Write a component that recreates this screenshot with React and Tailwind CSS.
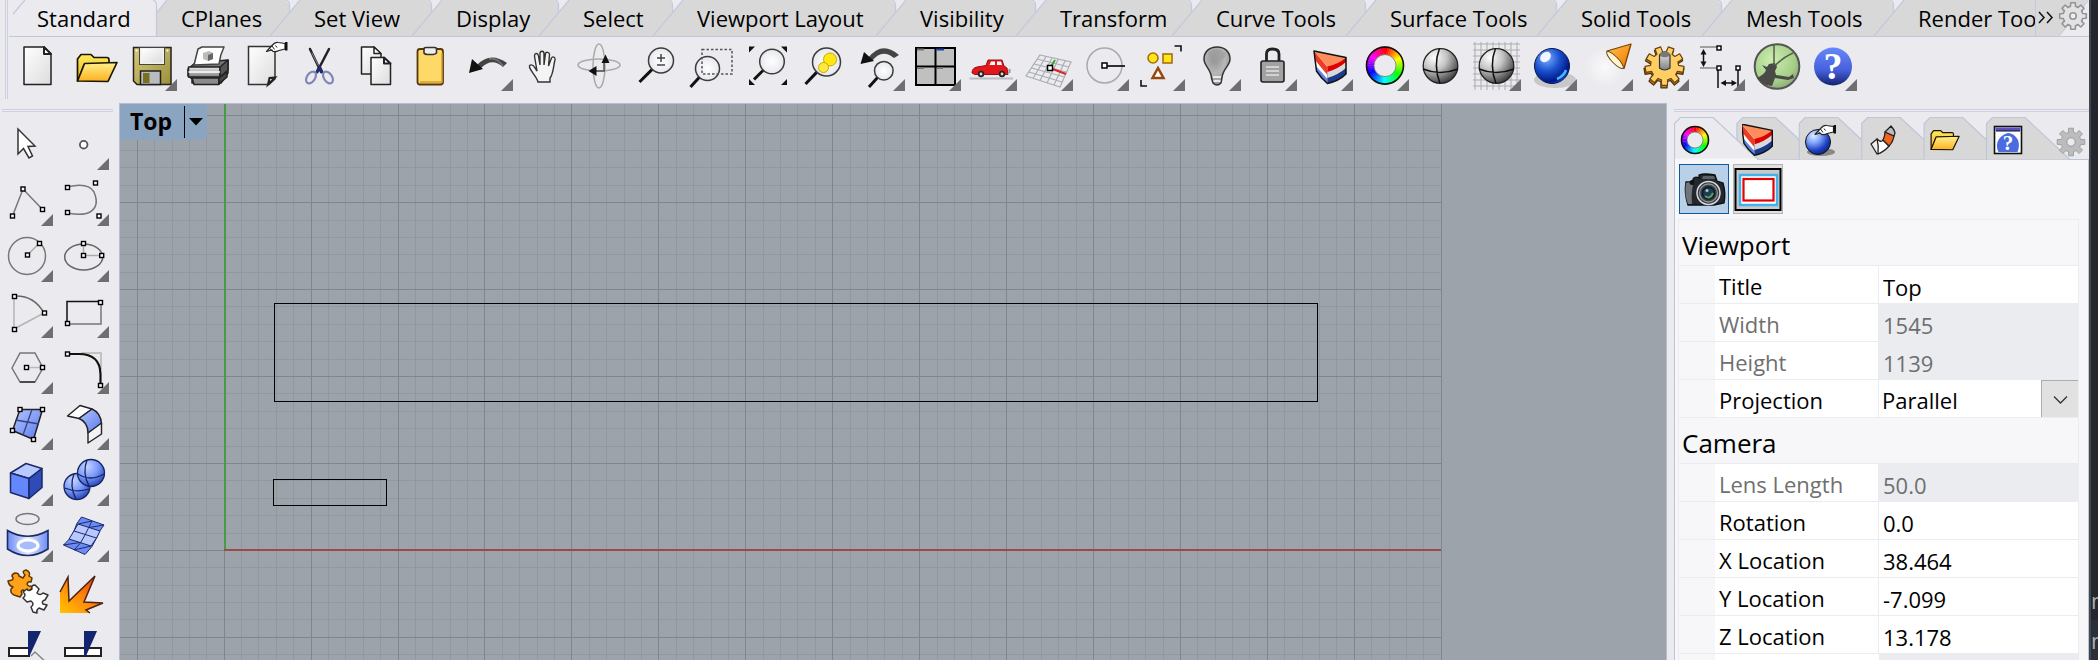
import React from "react";

/* ---------- shared drawing helpers ---------- */

const Handle = ({ x, y }) => (
  <rect x={x - 2} y={y - 2} width="4" height="4" fill="#fff" stroke="#000" strokeWidth="1.4" />
);

const Corner = () => <path d="M50 38V50H38Z" fill="#6f6f72" />;

const polar = (cx, cy, r, deg) => {
  const a = ((deg - 90) * Math.PI) / 180;
  return [cx + r * Math.cos(a), cy + r * Math.sin(a)];
};

const Wheel = ({ cx, cy, r, inner }) => {
  const mid = (r + inner) / 2;
  return (
    <g>
      {Array.from({ length: 48 }, (_, i) => {
        const [x1, y1] = polar(cx, cy, mid, i * 7.5 - 0.6);
        const [x2, y2] = polar(cx, cy, mid, i * 7.5 + 8.1);
        return (
          <path
            key={i}
            d={`M${x1} ${y1}A${mid} ${mid} 0 0 1 ${x2} ${y2}`}
            stroke={`hsl(${i * 7.5} 100% 50%)`}
            strokeWidth={r - inner}
            fill="none"
          />
        );
      })}
      <circle cx={cx} cy={cy} r={r - 0.5} fill="none" stroke="#111" strokeWidth="1.6" />
      <circle cx={cx} cy={cy} r={inner} fill="none" stroke="#777" strokeWidth="0.8" />
    </g>
  );
};

const Lens = ({ cx, cy, r, hx, hy }) => {
  const d = Math.hypot(hx - cx, hy - cy);
  const sx = cx + ((hx - cx) * r) / d;
  const sy = cy + ((hy - cy) * r) / d;
  return (
    <g>
      <path d={`M${sx} ${sy}L${hx} ${hy}`} stroke="#111" strokeWidth="3" />
      <circle cx={cx} cy={cy} r={r} fill="url(#lens)" stroke="#3c3c3c" strokeWidth="1.5" />
    </g>
  );
};

const gearPath = (cx, cy, ro, ri, teeth, offset = 0) => {
  const step = 360 / teeth;
  const pts = [];
  for (let i = 0; i < teeth; i++) {
    const a = i * step + offset;
    pts.push(polar(cx, cy, ri, a - step * 0.32));
    pts.push(polar(cx, cy, ro, a - step * 0.22));
    pts.push(polar(cx, cy, ro, a + step * 0.22));
    pts.push(polar(cx, cy, ri, a + step * 0.32));
  }
  return "M" + pts.map((p) => p[0].toFixed(1) + " " + p[1].toFixed(1)).join("L") + "Z";
};

const Wedge = () => (
  <g strokeLinejoin="round">
    <path d="M11 10L24.400 30V42.500L13.500 30Z" fill="#5b86e8" />
    <path d="M11 10L24.400 30V38L13 25Z" fill="#fff" />
    <path d="M11 10L24.400 26V34L12 19Z" fill="#ee3b24" />
    <path d="M24.400 30L43 24V33Q36 40 24.400 42.500Z" fill="#1c3a8c" />
    <path d="M24.400 28L43 20V27Q35 34 24.400 37Z" fill="#d9d9d9" />
    <path d="M24.400 24L43 16.500V21Q35 28 24.400 31Z" fill="#d00" />
    <path d="M11 10L43 16.500Q36 23 24.400 25.500Z" fill="#ff8d5c" />
    <path d="M11 10L43 16.500V33Q36 40 24.400 42.500Q18 37 13.500 30Z" fill="none" stroke="#111" strokeWidth="1.5" />
  </g>
);

const Folder = () => (
  <g stroke="#1c1500" strokeWidth="1.7" strokeLinejoin="round">
    <path d="M6.500 40V18L10 13.500H20L23 16.500H36Q38 16.500 38 19V24H13L7 40Z" fill="url(#folderBack)" />
    <path d="M6.500 40L13.500 22.500L46 21.500L37 40.500Z" fill="url(#folderFront)" />
  </g>
);

const Pointing = () => (
  <g stroke="#222" strokeWidth="1.200" strokeLinejoin="round">
    <path d="M27.500 10.500L33 4.500Q36 1 39 1.500L46 2.500V8L40 9.500Q37 11 34 10.500L33 9Z" fill="#fff" />
    <path d="M30.500 7.500L33 9.500M33 5L35.500 8.500M36.500 4.500L38 6.500" fill="none" strokeWidth="1" />
    <path d="M46 1V9.500H48.500V1Z" fill="#111" stroke="none" />
  </g>
);

const Ball = ({ fill }) => (
  <g>
    <circle cx="25.500" cy="25" r="17.300" fill={fill} stroke="#222" strokeWidth="1.300" />
    <path d="M24.500 7.500Q18 24 25 42.500M8 28Q25 35 43 28" fill="none" stroke="#111" strokeWidth="1.500" />
  </g>
);

const Defs = () => (
  <svg className="absolute h-0 w-0" aria-hidden="true">
    <defs>
      <linearGradient id="paper" x1="0" y1="0" x2="1" y2="1">
        <stop offset="0" stopColor="#fff" />
        <stop offset="1" stopColor="#dcdcdc" />
      </linearGradient>
      <linearGradient id="folderBack" x1="0" y1="0" x2="0" y2="1">
        <stop offset="0" stopColor="#ffe95e" />
        <stop offset="1" stopColor="#e5b81d" />
      </linearGradient>
      <linearGradient id="folderFront" x1="0" y1="0" x2="0" y2="1">
        <stop offset="0" stopColor="#fff08a" />
        <stop offset="1" stopColor="#fdb021" />
      </linearGradient>
      <linearGradient id="disk" x1="0" y1="0" x2="1" y2="1">
        <stop offset="0" stopColor="#d9cc7a" />
        <stop offset="1" stopColor="#9c8f3a" />
      </linearGradient>
      <linearGradient id="steel" x1="0" y1="0" x2="0" y2="1">
        <stop offset="0" stopColor="#e8e8e8" />
        <stop offset="1" stopColor="#808080" />
      </linearGradient>
      <linearGradient id="blueFace" x1="0" y1="0" x2="1" y2="1">
        <stop offset="0" stopColor="#b4c6ff" />
        <stop offset="1" stopColor="#5a78ee" />
      </linearGradient>
      <linearGradient id="blueBand" x1="0" y1="0" x2="1" y2="0">
        <stop offset="0" stopColor="#6c8cf5" />
        <stop offset="0.500" stopColor="#e4eaff" />
        <stop offset="1" stopColor="#6c8cf5" />
      </linearGradient>
      <linearGradient id="help" x1="0" y1="0" x2="0" y2="1">
        <stop offset="0" stopColor="#6688fa" />
        <stop offset="0.600" stopColor="#4560dc" />
        <stop offset="1" stopColor="#14236e" />
      </linearGradient>
      <linearGradient id="fire" x1="0" y1="1" x2="1" y2="0">
        <stop offset="0" stopColor="#ffc400" />
        <stop offset="0.450" stopColor="#ff8a0c" />
        <stop offset="1" stopColor="#ee2a10" />
      </linearGradient>
      <linearGradient id="coneFill" x1="0" y1="0" x2="1" y2="1">
        <stop offset="0" stopColor="#ffc94a" />
        <stop offset="1" stopColor="#f07000" />
      </linearGradient>
      <radialGradient id="lens">
        <stop offset="0" stopColor="#fff" />
        <stop offset="1" stopColor="#e6e8ec" />
      </radialGradient>
      <radialGradient id="greySphere" cx="0.320" cy="0.250" r="0.800">
        <stop offset="0" stopColor="#fff" />
        <stop offset="0.450" stopColor="#c4c4c4" />
        <stop offset="1" stopColor="#3c3c3c" />
      </radialGradient>
      <radialGradient id="blueSphere" cx="0.350" cy="0.280" r="0.800">
        <stop offset="0" stopColor="#7fb0ff" />
        <stop offset="0.450" stopColor="#1b53cf" />
        <stop offset="0.850" stopColor="#001585" />
        <stop offset="1" stopColor="#1d6cf0" />
      </radialGradient>
      <radialGradient id="paleBlueSphere" cx="0.320" cy="0.250" r="0.850">
        <stop offset="0" stopColor="#e2ecff" />
        <stop offset="0.350" stopColor="#7fa4fb" />
        <stop offset="0.700" stopColor="#1e40c0" />
        <stop offset="1" stopColor="#0a1b78" />
      </radialGradient>
      <radialGradient id="softBlue" cx="0.350" cy="0.250" r="0.800">
        <stop offset="0" stopColor="#c6d5ff" />
        <stop offset="0.550" stopColor="#7796f8" />
        <stop offset="1" stopColor="#2342b4" />
      </radialGradient>
      <radialGradient id="bulb" cx="0.400" cy="0.300" r="0.800">
        <stop offset="0" stopColor="#8f8f8f" />
        <stop offset="0.500" stopColor="#b8b8b8" />
        <stop offset="1" stopColor="#8a8a8a" />
      </radialGradient>
      <radialGradient id="green" cx="0.400" cy="0.350" r="0.700">
        <stop offset="0" stopColor="#cdeeb0" />
        <stop offset="0.700" stopColor="#a5cf88" />
        <stop offset="1" stopColor="#8ba67a" />
      </radialGradient>
      <radialGradient id="glow">
        <stop offset="0" stopColor="#fff" stopOpacity="0.700" />
        <stop offset="1" stopColor="#fff" stopOpacity="0" />
      </radialGradient>
    </defs>
  </svg>
);

/* ---------- top toolbar ---------- */

const topTools = [
  ["New", false, (
    <g stroke="#222" strokeWidth="1.500" strokeLinejoin="round">
      <path d="M9 6H29L36 13V43.500H9Z" fill="url(#paper)" />
      <path d="M29 6V13H36Z" fill="#fff" strokeWidth="2" />
    </g>
  )],
  ["Open", false, <Folder />],
  ["Save", true, (
    <g>
      <path d="M6.500 6.500H44V43.500H10L6.500 40Z" fill="url(#disk)" stroke="#222" strokeWidth="1.500" />
      <rect x="12.500" y="6.500" width="25" height="17" fill="#f0f0f0" stroke="#444" />
      <rect x="14.500" y="8" width="21" height="13.500" fill="url(#paper)" />
      <path d="M13.500 43.500V30H33.500V43.500Z" fill="#b8bcc0" stroke="#222" strokeWidth="1.500" />
      <rect x="16" y="32" width="6.500" height="10" fill="#7a6f1f" />
      <circle cx="9.500" cy="9.500" r="1" fill="#fff" />
      <circle cx="40.500" cy="9.500" r="1" fill="#fff" />
    </g>
  )],
  ["Print", false, (
    <g stroke="#222" strokeWidth="1.500" strokeLinejoin="round">
      <path d="M5 28L12 22L45 19V32L38 42H9V38L5 35Z" fill="#777" />
      <path d="M15 8Q13 16 11 24L36 23Q37 14 41 6H19Z" fill="#fff" stroke="#444" />
      <path d="M5.500 26H37V36H5.500Z" fill="url(#steel)" />
      <path d="M37 26L45 19V29L37 36Z" fill="#555" />
      <path d="M9 37H36V43.500H11Z" fill="#8c8c8c" />
      <path d="M36 37L44 31V36L36 43Z" fill="#444" />
      <path d="M5.500 31H37" stroke="#fff" />
      <path d="M20 12L26 10L30 12V18L25 20L20 18Z" fill="#bbb" stroke="none" />
      <path d="M25 14L30 12V18L25 20Z" fill="#666" stroke="none" />
    </g>
  )],
  ["Properties", false, (
    <g>
      <path d="M9.500 5.500H36V38L30 43.500H9.500Z" fill="url(#paper)" stroke="#333" strokeWidth="1.500" />
      <path d="M29 43.500L30.500 37L36 36.500Z" fill="#fff" stroke="#222" strokeWidth="2" />
      <Pointing />
    </g>
  )],
  ["Cut", false, (
    <g fill="none" strokeLinecap="round">
      <path d="M15 8L26 31M34 8L22 31" stroke="#222" strokeWidth="2.500" />
      <path d="M17 12L23.500 25" stroke="#888" strokeWidth="1" />
      <path d="M24.500 26L22 31M24.500 26L27 31" stroke="#1e2d6b" strokeWidth="3" />
      <ellipse cx="16" cy="36.500" rx="4" ry="6.500" transform="rotate(35 16 36.500)" stroke="#8087b8" strokeWidth="2.200" />
      <ellipse cx="33" cy="36.500" rx="4" ry="6.500" transform="rotate(-35 33 36.500)" stroke="#8087b8" strokeWidth="2.200" />
    </g>
  )],
  ["Copy", false, (
    <g stroke="#222" strokeWidth="1.500" strokeLinejoin="round">
      <path d="M10.500 6H23L30 13V33H10.500Z" fill="url(#paper)" />
      <path d="M23 6V12.500H30Z" fill="#fff" />
      <path d="M20 16.500H33L39.500 23V43.500H20Z" fill="url(#paper)" />
      <path d="M33 16.500V22.500H39.500Z" fill="#fff" strokeWidth="2" />
    </g>
  )],
  ["Paste", false, (
    <g>
      <rect x="10.500" y="8" width="25.500" height="35.500" rx="2.500" fill="#ffd968" stroke="#54380a" strokeWidth="1.800" />
      <path d="M35 12V41H13" fill="none" stroke="#d99c2b" strokeWidth="1.500" />
      <path d="M17 12V8Q17 6.500 19 6.500H27.500Q29.500 6.500 29.500 8V12Q28 13.500 26 13.500H20.500Q18 13.500 17 12Z" fill="#eee" stroke="#333" strokeWidth="1.600" />
    </g>
  )],
  ["Undo", true, (
    <g>
      <path d="M14 24Q27 10 44 22L40 26Q29 16 18 27Z" fill="#444" />
      <path d="M26 18Q34 16 40 25" fill="none" stroke="#777" strokeWidth="1.500" />
      <path d="M6 32L9 18L20 28Z" fill="#111" />
    </g>
  )],
  ["Pan", false, (
    <path
      d="M19 41C18 36 12 31 10.500 26C10 23 14 23 16 27L18 30L15.500 15C15.500 11.500 19 12 19.500 15L21 24V12.500C21 9.500 25 9.500 25 12.500V24L26.500 12.500C27 10.500 30.500 11 30.500 13.500L29.500 25L32.500 17C33.500 15 36.500 16 36 18.500C34.500 25 34 34 31 37V41Z"
      fill="#f4f4f4" stroke="#333" strokeWidth="1.400"
    />
  )],
  ["Rotate View", false, (
    <g fill="none" stroke="#aaa" strokeWidth="1.500">
      <ellipse cx="24" cy="24" rx="21" ry="6" />
      <ellipse cx="24" cy="25" rx="6" ry="22" />
      <path d="M18 30H30M29 20V30" stroke="#555" />
      <path d="M21.500 25V35L13.500 30ZM26.500 22L30.500 13.500L34.500 22Z" fill="#111" stroke="none" />
    </g>
  )],
  ["Zoom Dynamic", false, (
    <g>
      <Lens cx={30} cy={19.5} r={12.5} hx={8.5} hy={41} />
      <path d="M30 13V21M26 17H34M26 24H34" stroke="#444" strokeWidth="1.500" />
    </g>
  )],
  ["Zoom Window", false, (
    <g>
      <Lens cx={20.5} cy={27.5} r={12} hx={3.5} hy={46} />
      <rect x="15" y="8.500" width="30" height="24.500" fill="none" stroke="#555" strokeWidth="1.500" strokeDasharray="2.500 2" />
    </g>
  )],
  ["Zoom Extents", false, (
    <g>
      <Lens cx={29} cy={20.5} r={12.3} hx={11} hy={38.5} />
      <path d="M6 5.500H12L6 11.500ZM44 5.500H38L44 11.500ZM6 44H12L6 38ZM44 44H38L44 38Z" fill="#111" />
    </g>
  )],
  ["Zoom Selected", false, (
    <g>
      <Lens cx={27.5} cy={21} r={14} hx={6.5} hy={43} />
      <circle cx="31" cy="18.500" r="6.500" fill="#ffe713" stroke="#c9a800" />
      <circle cx="24.500" cy="26.500" r="5" fill="#ffe93e" stroke="#c9a800" />
    </g>
  )],
  ["Undo View Change", true, (
    <g>
      <Lens cx={28.8} cy={29.7} r={9.3} hx={14} hy={46} />
      <path d="M13 17Q27 -1 44 14L39 17Q27 7 17 20Z" fill="#444" />
      <path d="M5.500 23L9 11L19 20Z" fill="#111" />
    </g>
  )],
  ["4 View", true, (
    <g>
      <rect x="5" y="7" width="39" height="37" fill="#c0c0c0" stroke="#000" strokeWidth="2" />
      <path d="M24.500 7V44M5 25.500H44" stroke="#000" strokeWidth="2" />
      <path d="M6 8.500H13M6 27H13M26 27H32" stroke="#777" strokeWidth="2" />
      <path d="M25.500 8.500H33" stroke="#1d3fa8" strokeWidth="2" />
    </g>
  )],
  ["Car", true, (
    <g>
      <path d="M2.500 37.500H46" stroke="#b9bcc4" strokeWidth="2" />
      <path d="M5 32Q5 27 10 26L19 24.500L21 19H35L37 25L40 27L41 33.500H8Z" fill="#e3161b" stroke="#9b0d10" />
      <path d="M22.500 24L24 20.500H28V24ZM30 20.500H34L35 24H30Z" fill="#fff" />
      <circle cx="14" cy="33" r="3.200" fill="#222" />
      <circle cx="35" cy="33" r="3.200" fill="#222" />
      <circle cx="14" cy="33" r="1.400" fill="#ddd" />
      <circle cx="35" cy="33" r="1.400" fill="#ddd" />
      <path d="M42.500 28V32" stroke="#999" strokeWidth="2" />
    </g>
  )],
  ["Set CPlane", true, (
    <g fill="none" stroke="#aaadb2" strokeWidth="1.200">
      <path d="M17 14L48 21L37 46L3 35ZM14 18L46 26M11 23L43.500 31M8.500 27L41.500 36M6 31L39 41M23 15.500L10 37.500M29 17L17 39.500M35 18.500L24 42M42 20L31 44" />
      <path d="M27 27L32 19" stroke="#3aa235" strokeWidth="2" />
      <path d="M27 27L43 33" stroke="#d22" strokeWidth="2" />
      <rect x="24.500" y="24.500" width="5" height="5" fill="#fff" stroke="#000" strokeWidth="1.500" />
    </g>
  )],
  ["Object Snap", true, (
    <g>
      <circle cx="25.500" cy="24.500" r="17.500" fill="none" stroke="#aaa" strokeWidth="1.500" />
      <path d="M26 25H46" stroke="#000" strokeWidth="1.600" />
      <rect x="23" y="22" width="5" height="5" fill="#fff" stroke="#000" strokeWidth="1.500" />
    </g>
  )],
  ["Select Objects", true, (
    <g strokeWidth="1.600">
      <circle cx="18" cy="17" r="5" fill="#ffe715" stroke="#a86e12" />
      <rect x="28" y="13" width="9" height="9" fill="#ffe715" stroke="#a86e12" />
      <path d="M23 27L17.500 37H28.500Z" fill="#fff" stroke="#94480d" strokeWidth="2.500" />
      <path d="M39.500 5H46V10.500M6 39V45H12" fill="none" stroke="#111" />
    </g>
  )],
  ["Hide", true, (
    <g>
      <path d="M26 6C18 6 13 11 13 18C13 25 20 28 20.500 37L22 42Q26 46 30 42L31 37C31.500 28 39 25 39 18C39 11 34 6 26 6Z" fill="url(#bulb)" stroke="#333" strokeWidth="1.500" />
      <path d="M17 12Q26 5 35 12Q34 20 26 20Q18 20 17 12Z" fill="#9e9e9e" opacity="0.700" />
      <path d="M22 36H30M22.500 40H29.500" stroke="#e8e8e8" strokeWidth="2" />
    </g>
  )],
  ["Lock", true, (
    <g>
      <path d="M19.500 20V13Q19.500 8 25.500 8Q32 8 32 13V20" fill="none" stroke="#222" strokeWidth="2.800" />
      <rect x="14" y="20" width="23" height="21" rx="2" fill="#a2a2a2" stroke="#222" strokeWidth="1.600" />
      <path d="M19 26H32M19 30H32M19 34H32" stroke="#e2e2e2" strokeWidth="1.500" />
    </g>
  )],
  ["Layers", true, <Wedge />],
  ["Object Properties", true, <Wheel cx={26} cy={24.6} r={19} inner={11} />],
  ["Shade", false, <Ball fill="url(#greySphere)" />],
  ["Shaded Viewport", true, (
    <g>
      <path d="M4 1V49M10 1V49M16 1V49M22 1V49M28 1V49M34 1V49M40 1V49M46 1V49M2 3H49M2 9H49M2 15H49M2 21H49M2 27H49M2 33H49M2 39H49M2 45H49" stroke="#aaacb0" strokeWidth="1" />
      <Ball fill="url(#greySphere)" />
    </g>
  )],
  ["Render", true, (
    <g>
      <ellipse cx="28" cy="39" rx="21" ry="8" fill="#777" opacity="0.300" />
      <circle cx="25" cy="25" r="17.500" fill="url(#blueSphere)" stroke="#0b1550" />
      <ellipse cx="18.500" cy="16" rx="6" ry="4.500" fill="#fff" opacity="0.900" transform="rotate(-40 18.500 16)" />
      <path d="M30 38Q37 35 39 29" fill="none" stroke="#45b7ff" strokeWidth="2.500" />
    </g>
  )],
  ["Spotlight", true, (
    <g>
      <circle cx="22" cy="26" r="20" fill="url(#glow)" />
      <path d="M48 3L24 10Q30 21 41 27.500Z" fill="url(#coneFill)" stroke="#7a4300" strokeWidth="1.300" strokeLinejoin="round" />
      <ellipse cx="32" cy="19" rx="11.500" ry="3.200" transform="rotate(46 32 19)" fill="#fff3d0" stroke="#6b4a12" />
    </g>
  )],
  ["Options", true, (
    <g strokeLinejoin="round">
      <path d={gearPath(25, 27, 20, 14, 9, 20)} fill="#c27f1c" stroke="#4a3008" strokeWidth="1.200" />
      <path d={gearPath(25.5, 25, 19.5, 14, 9, 20)} fill="#ffcf66" stroke="#6b430a" strokeWidth="1.200" />
      <path d="M20.500 14Q25.500 8 31 14V27Q25.500 31 20.500 27Z" fill="url(#steel)" stroke="#333" strokeWidth="1.200" />
      <ellipse cx="25.700" cy="13.500" rx="5" ry="2.800" fill="#777" />
    </g>
  )],
  ["Dimensions", true, (
    <g stroke="#333" strokeWidth="1.500" fill="none">
      <path d="M5 6H22M5 27H22" stroke="#888" />
      <path d="M8.500 11V23M23 29V47M43 29V47M28 42H40" stroke="#111" />
      <path d="M8.500 8L5.500 13.500H11.500ZM8.500 26L5.500 20.500H11.500ZM25.500 42L31 39V45ZM42 42L36.500 39V45Z" fill="#111" stroke="none" />
      <Handle x={24} y={7} />
      <Handle x={24} y={27} />
      <Handle x={43} y={27} />
    </g>
  )],
  ["Grasshopper", false, (
    <g>
      <circle cx="26" cy="25.500" r="22.300" fill="url(#green)" stroke="#555" strokeWidth="2" />
      <path d="M6 37Q14 33 15 29L11 24L16 26L18 23L24 22L26 26L24 30L25 34L38 36L42 33L43 37L37 39L24 37L21 45Q11 44 6 37Z" fill="#4a4a46" />
      <path d="M23 24V4M24 25Q31 17 42 12" fill="none" stroke="#555f4c" strokeWidth="1.500" />
    </g>
  )],
  ["Help", true, (
    <g>
      <circle cx="26" cy="25.500" r="19" fill="url(#help)" />
      <text x="26" y="38" textAnchor="middle" className="font-['Liberation_Serif',serif] text-[38px] font-bold" fill="#fff">?</text>
    </g>
  )],
];

/* ---------- left toolbar ---------- */

const sideTools = [
  ["Select", false, (
    <path d="M15 9V34L20.500 28.500L26 38L29.500 36L25 26.500L32 26Z" fill="#fff" stroke="#333" strokeWidth="1.500" />
  )],
  ["Point", true, <circle cx="24.700" cy="24.700" r="3.800" fill="#fff" stroke="#555" strokeWidth="1.800" />],
  ["Polyline", true, (
    <g>
      <path d="M9.500 40L20 13L39.500 33.500" fill="none" stroke="#777" strokeWidth="1.500" />
      <Handle x={9.5} y={40} /><Handle x={20} y={13} /><Handle x={39.5} y={33.500} />
    </g>
  )],
  ["Curve", true, (
    <g>
      <path d="M8.500 11Q29 6 35 16Q41 30 31 36Q24 40 8.500 37" fill="none" stroke="#777" strokeWidth="1.500" />
      <Handle x={8.5} y={11.5} /><Handle x={36.5} y={7} /><Handle x={8.5} y={36.500} /><Handle x={40} y={40} />
    </g>
  )],
  ["Circle", true, (
    <g>
      <circle cx="24" cy="24" r="18.500" fill="none" stroke="#777" strokeWidth="1.500" />
      <path d="M24.500 23L36.500 11" stroke="#aaa" strokeWidth="1.500" />
      <Handle x={24.5} y={23} /><Handle x={36.5} y={11.5} />
    </g>
  )],
  ["Ellipse", true, (
    <g>
      <ellipse cx="24.700" cy="25" rx="19" ry="13" fill="none" stroke="#666" strokeWidth="1.500" />
      <path d="M24.500 11V23.500H43" fill="none" stroke="#aaa" strokeWidth="1.500" />
      <Handle x={24.500} y={11.500} /><Handle x={24.500} y={23.500} /><Handle x={42.700} y={23.500} />
    </g>
  )],
  ["Arc", true, (
    <g fill="none" strokeWidth="1.500">
      <path d="M11 41V8M11 41L41 25" stroke="#b5b5b5" />
      <path d="M11 8Q31 7 41 25" stroke="#666" />
      <Handle x={11.500} y={8.500} /><Handle x={41.500} y={25} /><Handle x={11.500} y={41.500} />
    </g>
  )],
  ["Rectangle", true, (
    <g fill="none" strokeWidth="1.500">
      <path d="M8 36V13.500H42" stroke="#111" />
      <path d="M42 13.500V36H8" stroke="#777" />
      <Handle x={41.500} y={14.500} /><Handle x={8.500} y={35.500} />
    </g>
  )],
  ["Polygon", true, (
    <g fill="none" strokeWidth="1.500">
      <path d="M9 24L17 9H32L40 24L32 38H17Z" stroke="#777" />
      <path d="M17 38H32" stroke="#333" />
      <path d="M24 23.500H39" stroke="#bbb" />
      <Handle x={23.500} y={23.500} /><Handle x={39.500} y={23.500} />
    </g>
  )],
  ["Fillet Curves", true, (
    <g fill="none">
      <path d="M22 9H42V25" stroke="#b5b5b5" strokeWidth="1.500" />
      <path d="M8.500 10H20Q41 10 41.500 30V42" stroke="#111" strokeWidth="2.200" />
      <Handle x={8.500} y={10} /><Handle x={41.500} y={41.500} />
    </g>
  )],
  ["Surface", true, (
    <g>
      <path d="M17 9.500H39.500L30.500 39.500L9.500 30.500Z" fill="url(#blueFace)" stroke="#222" strokeWidth="1.500" />
      <path d="M29 9.500L20 35M12.500 20L36 24" stroke="#33447f" strokeWidth="1.300" />
      <Handle x={17} y={9.500} /><Handle x={39.500} y={9.500} /><Handle x={9.500} y={30.500} /><Handle x={30.500} y={39.500} />
    </g>
  )],
  ["Fillet Surface", true, (
    <g stroke="#222" strokeWidth="1.400" strokeLinejoin="round">
      <path d="M8.500 16L21 5.500L33 9L20 18.500Z" fill="#fff" />
      <path d="M20 18.500L33 9Q42 13 42.500 24L29 33Q29 22 20 18.500Z" fill="url(#blueFace)" />
      <path d="M29 33L42.500 23V34L29 43Z" fill="#f3f3f3" />
    </g>
  )],
  ["Box", true, (
    <g stroke="#1a2a6b" strokeWidth="1.500" strokeLinejoin="round">
      <path d="M7.500 17L23 7.500L39 12.500L26 22.500Z" fill="#b9c8ff" />
      <path d="M7.500 17L26 22.500V42.500L7.500 36.500Z" fill="#6487fb" />
      <path d="M26 22.500L39 12.500V31.500L26 42.500Z" fill="#2f4bb7" />
    </g>
  )],
  ["Boolean Union", true, (
    <g stroke="#16245f" strokeWidth="1.300">
      <circle cx="18" cy="30.500" r="13" fill="url(#softBlue)" />
      <circle cx="32" cy="17" r="13.500" fill="url(#softBlue)" />
      <path d="M28 4Q23 17 30 30M19 18Q31 26 45 18M15 18Q10 30 17 43M5.500 32Q18 37 30 33" fill="none" />
    </g>
  )],
  ["Project Curve", true, (
    <g>
      <ellipse cx="24.500" cy="7" rx="11.500" ry="5.500" fill="none" stroke="#777" strokeWidth="1.500" />
      <path d="M4.500 18.500Q24.500 30 45 18.500V37Q24.500 50 4.500 37Z" fill="url(#blueBand)" stroke="#1c2a66" strokeWidth="1.600" />
      <ellipse cx="25" cy="33.500" rx="10" ry="5.500" fill="#a7bbff" stroke="#fff" strokeWidth="3" />
    </g>
  )],
  ["Mesh", true, (
    <g stroke="#1c2a6b" strokeWidth="1" strokeLinejoin="round">
      <path d="M22.500 5L45 13Q40 19 37.500 26Q34 35 26 42.500L4.500 33Q12 27 15 19Q17 11 22.500 5Z" fill="#6d8bf5" />
      <path d="M15 19L19 12L41 19L37.500 26L32 34L10 27Z" fill="#b9c9ff" />
      <path d="M15 19L37.500 26M33 9Q29 17 26 23Q22 32 15 38M19 12L33 9M30 15.500L45 13M4.500 33L21 30.500M15 38L32 34" fill="none" />
    </g>
  )],
  ["Explode Parts", false, (
    <g strokeWidth="1.500" strokeLinejoin="round">
      <path d="M6 15L10 14Q12 13 10 10Q10 8 13 7Q17 7 17 10L21 12L23 9Q19 5 24 4Q29 6 27 10L30 12L29 16Q26 15 25 18Q26 21 29 20L30 22L26 26L21 24Q18 25 20 28L18 31L12 29Q8 27 9 23L11 21Q7 20 6 15Z" transform="translate(-1 -2)" fill="#ffa11a" stroke="#5d3900" />
      <path d="M20 24L24 21Q26 24 29 21Q28 17 32 17L36 21L34 25Q37 28 40 25L45 27L42 32Q38 33 40 36L44 37L41 42L36 40Q33 42 34 45L30 44L28 39Q32 36 28 33L24 34L20 30Q24 27 20 24Z" fill="#fff" stroke="#333" />
    </g>
  )],
  ["Explode", false, (
    <g>
      <path d="M1 24L9 9L10 33L36 8L25 34L44 35L28 42L31 45H1Z" fill="url(#fire)" />
      <path d="M1 24L9 9L10 33L36 8L25 34L44 35L27 42L31 45" fill="none" stroke="#4a2410" strokeWidth="1.500" />
    </g>
  )],
  ["Trim", false, (
    <g>
      <path d="M6 24H26V32H6Z" fill="#fff" stroke="#222" strokeWidth="2" />
      <path d="M28 32L32 28L45 40" fill="none" stroke="#888" strokeWidth="1.500" />
      <path d="M25 7H38L27 31H25Z" fill="#14256f" />
    </g>
  )],
  ["Split", false, (
    <g>
      <path d="M6 24H42V32H6Z" fill="#fff" stroke="#222" strokeWidth="2" />
      <path d="M25 7H38L27 32H25Z" fill="#14256f" />
    </g>
  )],
];

const ToolButton = ({ tool }) => {
  const [name, more, art] = tool;
  return (
    <button type="button" aria-label={name} title={name} className="block h-[50px] w-[50px] shrink-0">
      <svg viewBox="0 0 50 50" className="block h-[50px] w-[50px]">
        {art}
        {more && <Corner />}
      </svg>
    </button>
  );
};

/* ---------- toolbar tabs ---------- */

const tabs = [
  ["Standard", "w-[148px]"],
  ["CPlanes", "w-[133px]"],
  ["Set View", "w-[142px]"],
  ["Display", "w-[127px]"],
  ["Select", "w-[114px]"],
  ["Viewport Layout", "w-[223px]"],
  ["Visibility", "w-[140px]"],
  ["Transform", "w-[156px]"],
  ["Curve Tools", "w-[174px]"],
  ["Surface Tools", "w-[191px]"],
  ["Solid Tools", "w-[165px]"],
  ["Mesh Tools", "w-[172px]"],
  ["Render Tools", "w-[191px]"],
];

const TabEdge = ({ full }) => (
  <svg className="absolute top-0 -left-5 h-9 w-8" viewBox="0 0 32 36" aria-hidden="true">
    {full && <path d="M0 36L30 0H32V36Z" fill="#d8d8d8" />}
    <path d="M15 0H30L19.500 13V4Z" fill="#ebebef" />
    <path d={full ? "M0 36L30 0" : "M19.500 13L30 0"} fill="none" stroke="#c4c9dd" strokeWidth="1.300" />
    <path d={full ? "M16 0Q19.500 1 19.500 5V13" : "M16 0Q19.500 1 19.500 5V36"} fill="none" stroke="#c4c9dd" strokeWidth="1.300" />
  </svg>
);

const TabBar = () => (
  <div className="flex h-[37px] border-b border-[#c0c6dc]">
    <div role="tablist" className="flex min-w-0 flex-1 overflow-hidden">
      {tabs.map(([name, width], i) => (
        <button
          key={name}
          type="button"
          role="tab"
          aria-selected={i === 0}
          className={`relative h-9 shrink-0 text-left text-[22px] leading-9 whitespace-nowrap text-black ${width} ${
            i === 0 ? "bg-[#ebebef] pl-7" : "bg-[#d8d8d8] pl-6"
          }`}
        >
          {i === 0 ? (
            <svg className="absolute top-0 left-0 h-9 w-8" viewBox="0 0 32 36" aria-hidden="true">
              <path d="M4 14L16 0" stroke="#c4c9dd" strokeWidth="1.300" />
            </svg>
          ) : (
            <TabEdge full={i > 1} />
          )}
          <span className="relative">{name}</span>
        </button>
      ))}
    </div>
    <button type="button" aria-label="More tabs" className="h-9 w-[20px] border-l border-[#c4c9dd] bg-[#d8d8d8]">
      <svg viewBox="0 0 20 36" className="block h-9 w-5">
        <path d="M3 12L8 17.500L3 23M11 12L16 17.500L11 23" fill="none" stroke="#111" strokeWidth="1.500" />
      </svg>
    </button>
    <button type="button" aria-label="Toolbar options" className="h-9 w-[34px]">
      <svg viewBox="0 0 34 36" className="block h-9 w-[34px]">
        <path d="M0 0H28L34 0L4 36H0Z" fill="#d8d8d8" />
        <path d="M4 36L33 1" stroke="#c4c9dd" />
        <path d={gearPath(18, 16, 13.5, 10, 8)} fill="#e2e2e4" stroke="#949494" strokeWidth="1.600" strokeLinejoin="round" />
        <circle cx="18" cy="16" r="3.200" fill="#eee" stroke="#949494" strokeWidth="1.600" />
      </svg>
    </button>
  </div>
);

/* ---------- model view ---------- */

const CELL = 17.386;
const ORIGIN = { x: 104, y: 445 };
const cols = Array.from({ length: 77 }, (_, i) => i - 6);
const rows = Array.from({ length: 33 }, (_, i) => i - 7);
const RIGHT = Math.floor(ORIGIN.x + 70 * CELL);

const ModelView = () => (
  <svg className="absolute inset-0 h-full w-full" shapeRendering="crispEdges" aria-label="Top view">
    {[false, true].map((major) => (
      <g key={String(major)} fill={major ? "#82858e" : "#92989e"}>
        {cols
          .filter((k) => (k % 5 === 0) === major && k <= 70)
          .map((k) => (
            <rect key={"c" + k} x={Math.floor(ORIGIN.x + 0.2 + k * CELL)} y="0" width="1" height="100%" />
          ))}
        {rows
          .filter((k) => (k % 5 === 0) === major)
          .map((k) => (
            <rect key={"r" + k} x="0" y={Math.round(ORIGIN.y + 0.9 - k * CELL)} width={RIGHT} height="1" />
          ))}
      </g>
    ))}
    <rect x={ORIGIN.x} y="0" width="2" height={ORIGIN.y} fill="#489a44" />
    <rect x={ORIGIN.x} y={ORIGIN.y} width={RIGHT - ORIGIN.x} height="2" fill="#9a4a48" />
    <g fill="none" stroke="#000" strokeWidth="1">
      <rect x="154.500" y="199.500" width="1043" height="98" />
      <rect x="153.500" y="375.500" width="113" height="26" />
    </g>
  </svg>
);

/* ---------- properties panel ---------- */

const panelTabs = [
  ["Properties", <Wheel cx={16} cy={16} r={14} inner={8} />],
  ["Layers", <g transform="translate(-11 -9.500) scale(0.960)"><Wedge /></g>],
  ["Rendering", (
    <g>
      <ellipse cx="17" cy="28" rx="14" ry="4" fill="#555" opacity="0.600" />
      <circle cx="14" cy="18" r="12.500" fill="url(#paleBlueSphere)" stroke="#111" />
      <g transform="translate(-16.500 0)"><Pointing /></g>
    </g>
  )],
  ["Materials", (
    <g stroke="#222" strokeWidth="1.300" strokeLinejoin="round">
      <path d="M4 20L10 15L15 21L13 29L10 30Z" fill="#eee" />
      <path d="M10 15Q14 19 16 16L22 22Q18 27 11 30Q12 22 10 15Z" fill="#fff" />
      <path d="M16 16Q18 12 18 8L27 12Q26 18 22 22Z" fill="#f0641e" />
      <path d="M18 8L24 2L27 6L28 9L27 12Z" fill="#bbb" />
    </g>
  )],
  ["Libraries", <g transform="translate(-2.500 -3) scale(0.710)"><Folder /></g>],
  ["Help", (
    <g>
      <rect x="2.500" y="2.500" width="27" height="27" fill="#fff" stroke="#111" strokeWidth="1.600" />
      <rect x="3.500" y="3.500" width="25" height="3.500" fill="#5a50c8" />
      <path d="M4 7H28" stroke="#111" />
      <path d="M6.500 28Q3 21 7 15Q11 10 16 9Q22 9 26 16Q28 22 25.500 28Z" fill="#4a6ce0" />
      <text x="16" y="25.500" textAnchor="middle" className="font-['Liberation_Serif',serif] text-[21px] font-bold" fill="#fff">?</text>
    </g>
  )],
];

const tabShape = (x) => `M${x + 0.5} 42.500V6.500L${x + 6.5} 0.500H${x + 39}L${x + 84} 42.500`;

const PanelTabs = () => (
  <div role="tablist" className="relative flex h-[42px]">
    <svg className="absolute inset-0 h-[43px] w-full" aria-hidden="true">
      <path d="M0 42.500H2000" stroke="#bcc4d8" />
      {[1, 2, 3, 4, 5].map((i) => (
        <path key={i} d={tabShape(i * 62.4)} fill="#d8d8d8" stroke="#c0c6da" strokeWidth="1.200" />
      ))}
      <path d={tabShape(0)} fill="#ebebef" stroke="#c0c6da" strokeWidth="1.200" />
      <path d="M1 42.500H83" stroke="#f6f6f9" strokeWidth="2" />
    </svg>
    <div className="relative grid w-[375px] grid-cols-6">
      {panelTabs.map(([name, art], i) => (
        <button key={name} type="button" role="tab" aria-selected={i === 0} aria-label={name} title={name} className="flex h-[42px] items-center pt-1 pl-[5px]">
          <svg viewBox="0 0 32 32" className="h-8 w-8">{art}</svg>
        </button>
      ))}
    </div>
    <button type="button" aria-label="Panel options" className="relative ml-auto flex w-[33px] items-center pt-2">
      <svg viewBox="0 0 30 30" className="h-[30px] w-[30px]">
        <path d={gearPath(15, 15, 14, 10, 8)} fill="#bcbcbe" stroke="#a0a0a2" strokeLinejoin="round" />
        <circle cx="15" cy="15" r="4.200" fill="#ebebef" stroke="#999" />
      </svg>
    </button>
  </div>
);

const sections = [
  {
    title: "Viewport",
    rows: [
      ["Title", "Top"],
      ["Width", "1545", true],
      ["Height", "1139", true],
      ["Projection", "Parallel", false, true],
    ],
  },
  {
    title: "Camera",
    rows: [
      ["Lens Length", "50.0", true],
      ["Rotation", "0.0"],
      ["X Location", "38.464"],
      ["Y Location", "-7.099"],
      ["Z Location", "13.178"],
    ],
  },
];

const Row = ({ row }) => {
  const [name, value, disabled, choice] = row;
  const id = "prop-" + name.toLowerCase().replace(/ /g, "-");
  const tone = disabled ? "text-[#6f6f6f]" : "text-black";
  return (
    <tr className="h-[38px]">
      <td className="border-b border-[#ebecf0]" />
      <th scope="row" className={`border-r border-b border-[#ebecf0] bg-white p-0 text-left font-normal ${tone}`}>
        <label htmlFor={id} className="block h-[37px] pt-1 pl-1 leading-[33px] whitespace-nowrap">{name}</label>
      </th>
      <td className={`border-b border-[#ebecf0] p-0 ${disabled ? "bg-[#ebecf0]" : "bg-white"}`}>
        {choice ? (
          <div className="relative">
            <select id={id} defaultValue={value} className="block h-[37px] w-full appearance-none bg-white pt-1 pl-[3px] leading-[33px] outline-none">
              <option>Parallel</option>
              <option>Perspective</option>
            </select>
            <span className="pointer-events-none absolute top-0 right-0 h-[37px] w-[37px] border-t border-l border-[#adadad] bg-[#e1e1e1]">
              <svg viewBox="0 0 36 36" className="h-9 w-9" aria-hidden="true">
                <path d="M12 15.500L18.500 22L25 15.500" fill="none" stroke="#333" strokeWidth="1.300" />
              </svg>
            </span>
          </div>
        ) : (
          <input id={id} defaultValue={value} disabled={disabled} className={`block h-[37px] w-full bg-transparent pt-1 pl-1 leading-[33px] outline-none ${tone}`} />
        )}
      </td>
    </tr>
  );
};

const Properties = () => (
  <div className="min-h-0 flex-1 overflow-hidden border-r border-l border-[#bcc4d8] bg-[#f7f7f9] pt-[5px] pr-[9px] pl-[3px]">
    <div className="flex gap-1 pl-px">
      <button type="button" aria-label="Viewport properties" aria-pressed="true" className="h-[50px] w-[50px] border border-[#0b5a9e] bg-[#b8d1e9]">
        <svg viewBox="0 0 48 48" className="block h-12 w-12">
          <path d="M13 17V14Q15 11 19 13V10Q24 8 35 10L37 16L43 18Q46 28 44 38L34 40H8Q4 28 6 17Z" fill="#24282d" stroke="#0c0e10" strokeWidth="1.300" />
          <path d="M6 18Q10 16 13 19Q11 30 12 39H8Q4 29 6 18Z" fill="#70757b" />
          <path d="M23 11H34L35 14H22Z" fill="#5b6168" />
          <circle cx="12" cy="17.500" r="2.500" fill="#111" />
          <circle cx="28.500" cy="28" r="11.500" fill="#33383d" stroke="#d7dade" strokeWidth="1.500" />
          <circle cx="28.500" cy="28" r="9" fill="#3b4046" stroke="#8f959b" strokeWidth="1.300" />
          <circle cx="28.500" cy="28" r="6" fill="#1d3d52" stroke="#101820" strokeWidth="1.500" />
          <path d="M25 31Q30 35 33 28" fill="none" stroke="#5c9a66" strokeWidth="2" />
          <circle cx="27" cy="25.500" r="1.500" fill="#a9c7d6" />
        </svg>
      </button>
      <button type="button" aria-label="Wallpaper properties" className="h-[50px] w-[50px] border border-[#b4b4b4] bg-[#e0e0e0]">
        <svg viewBox="0 0 48 48" className="block h-12 w-12">
          <rect x="1.500" y="4" width="45" height="41" fill="#c9c9c9" stroke="#000" strokeWidth="2" />
          <rect x="6" y="10" width="37" height="30" fill="#fff" stroke="#3fb4ea" strokeWidth="2.500" />
          <rect x="9.500" y="14" width="30" height="21.500" fill="#fff" stroke="#e60000" strokeWidth="2.200" />
        </svg>
      </button>
    </div>
    <table className="mt-[5px] w-full table-fixed border-separate border-spacing-0 border border-[#ebecf0] text-[22px]">
      <colgroup>
        <col className="w-9" />
        <col className="w-[164px]" />
        <col />
      </colgroup>
      {sections.map((s) => (
        <tbody key={s.title}>
          <tr className="h-[46px]">
            <th colSpan={3} scope="colgroup" className="border-b border-[#ebecf0] pt-1 pl-[3px] text-left text-[26px] leading-[36px] font-normal">{s.title}</th>
          </tr>
          {s.rows.map((r) => (
            <Row key={r[0]} row={r} />
          ))}
        </tbody>
      ))}
      <tbody>
        <tr className="h-[38px]">
          <td />
          <td className="bg-white" />
          <td className="bg-[#ebecf0]" />
        </tr>
      </tbody>
    </table>
  </div>
);

/* ---------- window ---------- */

export default function App() {
  return (
    <div className="flex h-screen w-full overflow-hidden bg-[#ebebef] font-['Open_Sans','Noto_Sans',sans-serif] text-black">
      <Defs />
      <div className="flex min-w-0 flex-1 flex-col">
        <header className="flex h-[103px] shrink-0">
          <div className="mr-px ml-[5px] h-[99px] w-[3px] border-x border-[#ccd0df]" />
          <div className="min-w-0 flex-1">
            <TabBar />
            <div role="toolbar" aria-label="Standard" className="flex gap-1.5 overflow-hidden pt-1 pl-1.5">
              {topTools.map((t) => (
                <ToolButton key={t[0]} tool={t} />
              ))}
            </div>
          </div>
        </header>
        <div className="flex min-h-0 flex-1">
          <aside className="w-[119px] shrink-0 overflow-hidden pt-1.5">
            <div className="mr-1.5 ml-0.5 h-[3px] border-y border-[#ccd0df]" />
            <div role="toolbar" aria-label="Tools" className="mt-2 grid grid-cols-[50px_50px] gap-1.5 pl-[3px]">
              {sideTools.map((t) => (
                <ToolButton key={t[0]} tool={t} />
              ))}
            </div>
          </aside>
          <main className="relative min-w-0 flex-1 overflow-hidden border-t border-r border-l border-[#b4bdd0] bg-[#9da3aa]">
            <ModelView />
            <div className="relative flex h-9 w-[87px] items-center rounded-br-md bg-[#8ba5c1]">
              <button type="button" className="w-16 pb-0.5 pl-2.5 text-left text-[23px] leading-[34px] font-bold">Top</button>
              <button type="button" aria-label="Viewport menu" className="flex h-8 flex-1 items-center border-l border-black pl-1">
                <svg viewBox="0 0 14 8" className="h-2 w-3.5">
                  <path d="M0 0H14L7 7.500Z" />
                </svg>
              </button>
            </div>
          </main>
          <aside className="flex w-[422px] shrink-0 flex-col pt-1.5 pl-[7px]">
            <div className="mb-[5px] h-[3px] shrink-0 border-y border-[#ccd0df]" />
            <PanelTabs />
            <Properties />
          </aside>
        </div>
      </div>
      <div className="flex w-[9px] shrink-0 flex-col justify-end overflow-hidden border-l-2 border-[#41474d] bg-[#24272e] text-[22px] text-[#a9adb5]" aria-hidden="true">
        <span className="h-10 leading-10">n</span>
        <span className="h-10 bg-[#2b2f3a] leading-10">n</span>
      </div>
    </div>
  );
}
